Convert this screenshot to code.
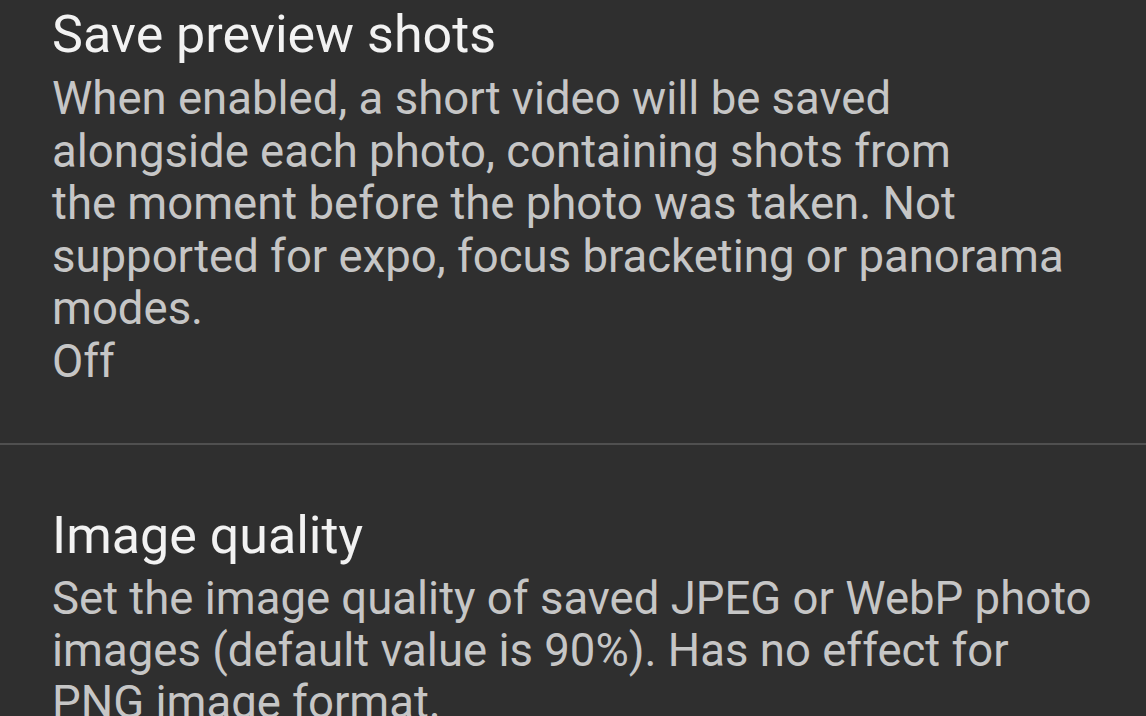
const sections = [
  {
    title: "Save preview shots",
    lines: [
      "When enabled, a short video will be saved",
      "alongside each photo, containing shots from",
      "the moment before the photo was taken. Not",
      "supported for expo, focus bracketing or panorama",
      "modes.",
      "Off",
    ],
  },
  {
    title: "Image quality",
    lines: [
      "Set the image quality of saved JPEG or WebP photo",
      "images (default value is 90%). Has no effect for",
      "PNG image format.",
    ],
  },
];

function App() {
  return (
    <div
      className="w-[1146px] h-[716px] overflow-hidden bg-[#2f2f2f]"
      style={{ fontFamily: "Roboto, 'Noto Sans', sans-serif" }}
    >
      {/* first preference, top cut off by the screenshot */}
      <div className="pl-[52px] pt-[9px] pb-[54px]">
        <div className="text-[52px] leading-[52px] text-[#f2f2f2] whitespace-nowrap">
          {sections[0].title}
        </div>
        <div className="mt-[12px] text-[45.5px] leading-[52.6px] text-[#c6c6c6] whitespace-nowrap">
          {sections[0].lines.map((l) => (
            <div key={l}>{l}</div>
          ))}
        </div>
      </div>

      <div className="h-[2px] bg-[#505050]" />

      {/* second preference, bottom cut off */}
      <div className="pl-[52px] pt-[65px]">
        <div className="text-[52px] leading-[52px] text-[#f2f2f2] whitespace-nowrap">
          {sections[1].title}
        </div>
        <div className="mt-[11px] text-[45.5px] leading-[52px] text-[#c6c6c6] whitespace-nowrap">
          {sections[1].lines.map((l) => (
            <div key={l}>{l}</div>
          ))}
        </div>
      </div>
    </div>
  );
}

export default App;
